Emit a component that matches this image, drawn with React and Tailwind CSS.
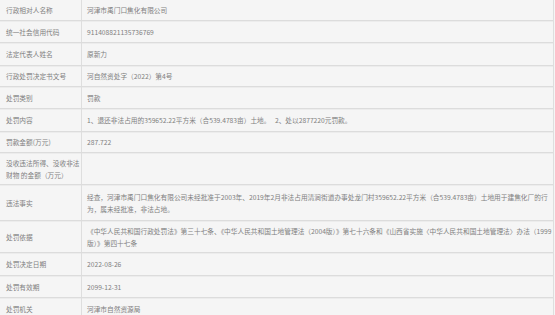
import React from "react";

const rows = [
  { label: "行政相对人名称", value: "河津市禹门口焦化有限公司", h: "h-[21px]" },
  { label: "统一社会信用代码", value: "911408821135736769", h: "h-[22px]" },
  { label: "法定代表人姓名", value: "原新力", h: "h-[23px]" },
  { label: "行政处罚决定书文号", value: "河自然资处字（2022）第4号", h: "h-[21px]" },
  { label: "处罚类别", value: "罚款", h: "h-[22px]" },
  {
    label: "处罚内容",
    value: "1、退还非法占用的359652.22平方米（合539.4783亩）土地。\u00a0\u00a0 2、处以2877220元罚款。",
    h: "h-[23px]",
  },
  { label: "罚款金额(万元)", value: "287.722", h: "h-[21px]" },
  {
    label: (
      <>
        没收违法所得、没收非法
        <br />
        财物 的金额（万元）
      </>
    ),
    value: "",
    h: "h-[32px]",
  },
  {
    label: "违法事实",
    value: (
      <>
        经查，河津市禹门口焦化有限公司未经批准于2003年、2019年2月非法占用清涧街道办事处龙门村359652.22平方米（合539.4783亩）土地用于建焦化厂的行
        <br />
        为，属未经批准，非法占地。
      </>
    ),
    h: "h-[36px]",
  },
  {
    label: "处罚依据",
    value: (
      <>
        《中华人民共和国行政处罚法》第三十七条、《中华人民共和国土地管理法（2004版）》第七十六条和《山西省实施〈中华人民共和国土地管理法〉办法（1999
        <br />
        版）》第四十七条
      </>
    ),
    h: "h-[32px]",
  },
  { label: "处罚决定日期", value: "2022-08-26", h: "h-[23px]" },
  { label: "处罚有效期", value: "2099-12-31", h: "h-[22px]" },
  { label: "处罚机关", value: "河津市自然资源局", h: "h-[22px]" },
];

export default function App() {
  return (
    <div
      className="w-[555px] h-[315px] overflow-hidden bg-[#f5f5f5]"
      style={{ fontFamily: '"Noto Sans CJK SC", "Noto Sans", sans-serif' }}
    >
      <div className="w-[554px] border-r border-[#dedede] text-[6.7px] leading-[12px] text-[#808080]">
        {rows.map((r, i) => (
          <div
            key={i}
            className={`flex ${r.h} border-b border-[#dcdcdc] shadow-[0_1px_0_#ececec]`}
          >
            <div className="w-[82px] shrink-0 border-r border-[#dedede] pl-[6px] flex items-center whitespace-nowrap">
              <div>{r.label}</div>
            </div>
            <div className="flex-1 pl-[5px] flex items-center whitespace-nowrap">
              <div>{r.value}</div>
            </div>
          </div>
        ))}
      </div>
    </div>
  );
}
